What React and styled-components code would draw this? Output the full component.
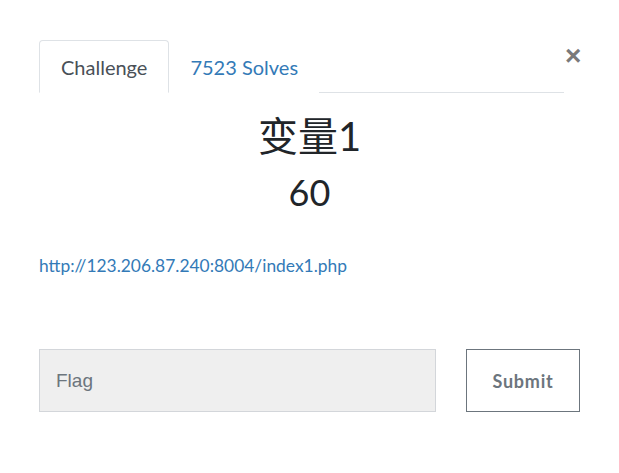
import React from "react";
import styled, { createGlobalStyle } from "styled-components";

const GlobalStyle = createGlobalStyle`
  body {
    margin: 0;
    background: #fff;
    font-family: Lato, "Noto Sans CJK SC", sans-serif;
    color: #212529;
  }
`;

const Modal = styled.div`
  width: 541px;
  padding: 40px 39px 0 39px;
`;

const Header = styled.div`
  display: flex;
  align-items: flex-start;
`;

const Tabs = styled.ul`
  display: flex;
  flex-shrink: 0;
  width: 525px;
  margin: 0;
  padding: 0;
  list-style: none;
  border-bottom: 1px solid #dee2e6;
`;

const Tab = styled.li`
  height: 51px;
  padding: 0 ${(p) => (p.$active ? "21px" : "20px")};
  display: flex;
  align-items: center;
  font-size: 20px;
  margin-bottom: -1px;
  border: 1px solid ${(p) => (p.$active ? "#dee2e6" : "transparent")};
  border-bottom-color: ${(p) => (p.$active ? "#fff" : "transparent")};
  border-radius: 4px 4px 0 0;
  background: #fff;
  color: ${(p) => (p.$active ? "#495057" : "#337ab7")};
`;

const Close = styled.button`
  margin: 2px 0 0 0;
  padding: 0 0 0 1px;
  border: 0;
  background: none;
  font-family: "Liberation Sans", sans-serif;
  font-size: 28px;
  font-weight: 700;
  line-height: 1;
  color: #7a7a7a;
`;

const Title = styled.h2`
  margin: 19px 0 0;
  text-align: center;
  font-size: 40px;
  font-weight: 400;
  line-height: 1.2;
`;

const Value = styled.h3`
  margin: 11px 0 0;
  text-align: center;
  font-size: 36px;
  font-weight: 400;
  line-height: 1.2;
`;

const Link = styled.a`
  display: block;
  margin-top: 41px;
  font-size: 17.4px;
  color: #337ab7;
  text-decoration: none;
`;

const SubmitRow = styled.div`
  display: flex;
  gap: 30px;
  margin-top: 73px;
`;

const FlagInput = styled.input`
  box-sizing: border-box;
  width: 397px;
  height: 63px;
  padding: 0 16px;
  border: 1px solid #d3d6da;
  background: #efefef;
  font-family: "Liberation Sans", sans-serif;
  font-size: 19px;
  outline: none;
  &::placeholder {
    color: #6c757d;
  }
`;

const SubmitButton = styled.button`
  box-sizing: border-box;
  width: 114px;
  height: 63px;
  border: 1px solid #6c757d;
  background: #fff;
  color: #6c757d;
  font-family: Lato, sans-serif;
  font-size: 18px;
  font-weight: 700;
  letter-spacing: 0.8px;
`;

export default function App() {
  return (
    <Modal>
      <GlobalStyle />
      <Header>
        <Tabs>
          <Tab $active>Challenge</Tab>
          <Tab>7523 Solves</Tab>
        </Tabs>
        <Close>×</Close>
      </Header>
      <Title>变量1</Title>
      <Value>60</Value>
      <Link href="#">http://123.206.87.240:8004/index1.php</Link>
      <SubmitRow>
        <FlagInput placeholder="Flag" />
        <SubmitButton>Submit</SubmitButton>
      </SubmitRow>
    </Modal>
  );
}
